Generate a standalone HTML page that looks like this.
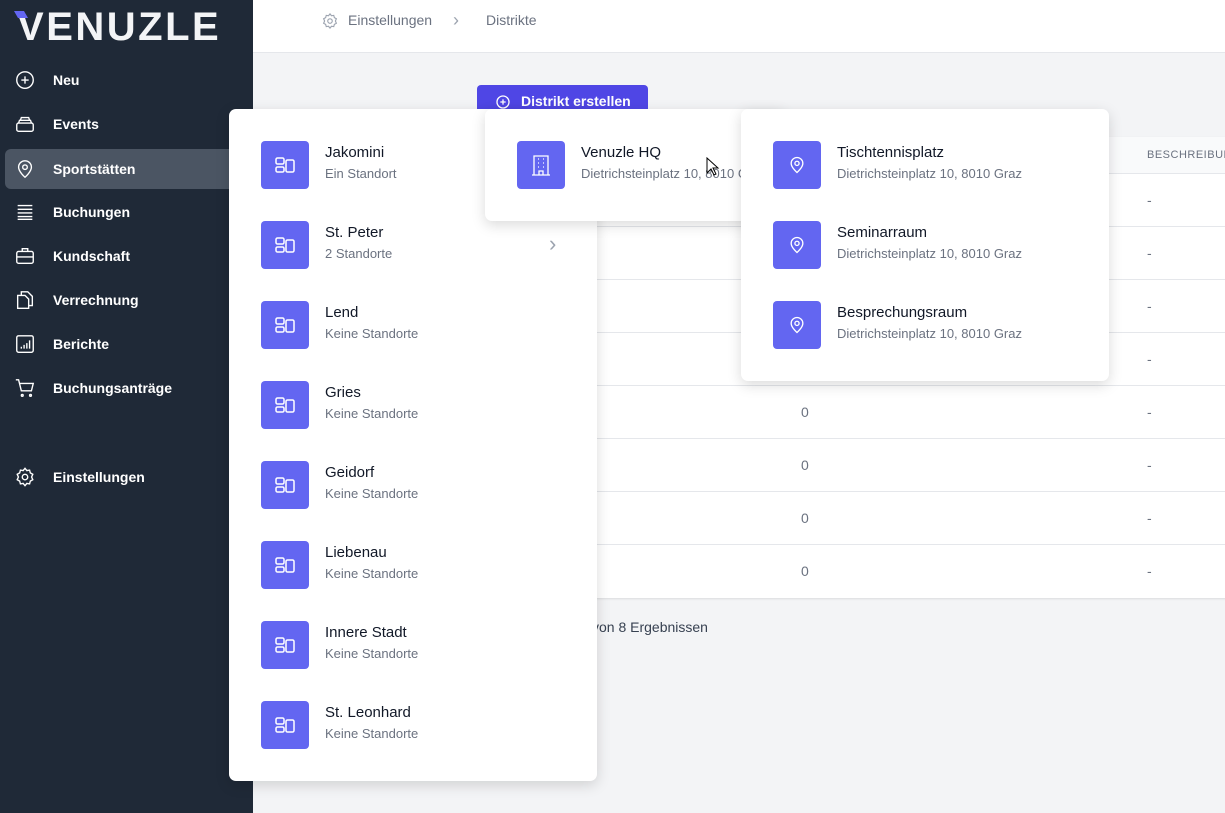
<!DOCTYPE html>
<html><head><meta charset="utf-8"><style>
*{box-sizing:border-box;margin:0;padding:0}
body{width:1225px;height:813px;overflow:hidden;background:#f3f4f6;font-family:"Liberation Sans",sans-serif;position:relative}
.side{position:absolute;left:0;top:0;width:253px;height:813px;background:#1f2937}
.logo{position:absolute;left:17px;top:5px;color:#f3f4f6;font-size:40px;font-weight:bold;letter-spacing:2.5px}
.nav{position:absolute;left:5px;width:240px;height:40px;color:#fff;font-size:14px;font-weight:bold;display:flex;align-items:center;border-radius:6px}
.nav svg{position:absolute;left:9px;width:22px;height:22px}
.nav span{position:absolute;left:48px}
.nav.act{background:#4b5563}
.top{position:absolute;left:253px;top:0;right:0;height:53px;background:#fff;border-bottom:1px solid #e5e7eb;font-size:14px;color:#6b7280}
.tbl{position:absolute;left:477px;top:137px;width:760px;height:461px;background:#fff;box-shadow:0 1px 2px rgba(0,0,0,.1)}
.tr{position:absolute;left:0;width:100%;border-top:1px solid #e5e7eb;height:53px;font-size:14px;color:#6b7280}
.btn{position:absolute;left:477px;top:85px;width:171px;height:30px;background:#4f46e5;border-radius:4px;color:#fff;font-size:14px;font-weight:bold}
.panel{position:absolute;background:#fff;border-radius:7px;box-shadow:0 4px 14px rgba(0,0,0,.15)}
.it{position:absolute;left:32px;height:48px;width:330px}
.ic{position:absolute;left:0;top:0;width:48px;height:48px;background:#6366f1;border-radius:4px;display:flex;align-items:center;justify-content:center}
.t1{position:absolute;left:64px;top:3px;font-size:15px;color:#111827;white-space:nowrap}
.t2{position:absolute;left:64px;top:25px;font-size:13px;color:#6b7280;white-space:nowrap}
</style></head><body>
<div class="side">
<div class="logo"><span style="position:relative">V<span style="position:absolute;left:-1px;top:6px;width:10px;height:7px;background:#6366f1;transform:skewX(30deg)"></span></span>ENUZLE</div>
<div class="nav" style="top:60px"><svg viewBox="0 0 24 24" fill="none" stroke="#fff" stroke-width="1.5"><circle cx="12" cy="12" r="9"/><path d="M12 8v8M8 12h8"/></svg><span>Neu</span></div>
<div class="nav" style="top:104px"><svg viewBox="0 0 24 24" fill="none" stroke="#fff" stroke-width="1.5"><rect x="3" y="11" width="18" height="9" rx="2"/><path d="M5 11l1-3h12l1 3M7 8l1-3h8l1 3"/></svg><span>Events</span></div>
<div class="nav act" style="top:149px"><svg viewBox="0 0 24 24" fill="none" stroke="#fff" stroke-width="1.5"><path d="M12 21s-7-6-7-11a7 7 0 0114 0c0 5-7 11-7 11z"/><circle cx="12" cy="10" r="2.5"/></svg><span>Sportstätten</span></div>
<div class="nav" style="top:192px"><svg viewBox="0 0 24 24" fill="none" stroke="#fff" stroke-width="1.5"><path d="M4 5h16M4 9h16M4 13h16M4 17h16M4 20h16"/></svg><span>Buchungen</span></div>
<div class="nav" style="top:236px"><svg viewBox="0 0 24 24" fill="none" stroke="#fff" stroke-width="1.5"><rect x="3" y="7" width="18" height="13" rx="2"/><path d="M9 7V4h6v3M3 13h18"/></svg><span>Kundschaft</span></div>
<div class="nav" style="top:280px"><svg viewBox="0 0 24 24" fill="none" stroke="#fff" stroke-width="1.5"><path d="M8 7V3h7l5 5v10h-4M4 7h8l4 4v10H4z"/></svg><span>Verrechnung</span></div>
<div class="nav" style="top:324px"><svg viewBox="0 0 24 24" fill="none" stroke="#fff" stroke-width="1.5"><rect x="3" y="3" width="18" height="18" rx="2"/><path d="M8 17v-2M11 17v-4M14 17v-6M17 17V8"/></svg><span>Berichte</span></div>
<div class="nav" style="top:368px"><svg viewBox="0 0 24 24" fill="none" stroke="#fff" stroke-width="1.5"><path d="M2 3h3l3 12h11l2-8H6"/><circle cx="9" cy="20" r="1"/><circle cx="18" cy="20" r="1"/></svg><span>Buchungsanträge</span></div>
<div class="nav" style="top:457px"><svg viewBox="0 0 24 24" fill="none" stroke="#fff" stroke-width="1.5"><circle cx="12" cy="12" r="3"/><path d="M12 2.5l2 2.5 3-.5.8 3 2.7 1.5-1.3 3 1.3 3-2.7 1.5-.8 3-3-.5-2 2.5-2-2.5-3 .5-.8-3L3.5 15l1.3-3-1.3-3 2.7-1.5.8-3 3 .5z"/></svg><span>Einstellungen</span></div>
</div>
<div class="top">
<svg style="position:absolute;left:68px;top:12px" width="18" height="18" viewBox="0 0 24 24" fill="none" stroke="#9ca3af" stroke-width="1.5"><circle cx="12" cy="12" r="3"/><path d="M12 2.5l2 2.5 3-.5.8 3 2.7 1.5-1.3 3 1.3 3-2.7 1.5-.8 3-3-.5-2 2.5-2-2.5-3 .5-.8-3L3.5 15l1.3-3-1.3-3 2.7-1.5.8-3 3 .5z"/></svg>
<span style="position:absolute;left:95px;top:12px">Einstellungen</span>
<span style="position:absolute;left:200px;top:10px;color:#9ca3af;font-size:18px">&#8250;</span>
<span style="position:absolute;left:233px;top:12px">Distrikte</span>
</div>
<div class="btn"><svg style="position:absolute;left:18px;top:9px" width="16" height="16" viewBox="0 0 24 24" fill="none" stroke="#fff" stroke-width="2"><circle cx="12" cy="12" r="9"/><path d="M12 8v8M8 12h8"/></svg><span style="position:absolute;left:44px;top:8px">Distrikt erstellen</span></div>
<div class="tbl">
<div style="position:absolute;left:0;top:0;width:100%;height:36px;background:#f9fafb"></div>
<span style="position:absolute;left:670px;top:12px;font-size:11px;color:#6b7280;letter-spacing:.5px">BESCHREIBUNG</span>
<div class="tr" style="top:36px"><span style="position:absolute;left:670px;top:18px">-</span></div>
<div class="tr" style="top:89px"><span style="position:absolute;left:670px;top:18px">-</span></div>
<div class="tr" style="top:142px"><span style="position:absolute;left:670px;top:18px">-</span></div>
<div class="tr" style="top:195px"><span style="position:absolute;left:670px;top:18px">-</span></div>
<div class="tr" style="top:248px"><span style="position:absolute;left:324px;top:18px">0</span><span style="position:absolute;left:670px;top:18px">-</span></div>
<div class="tr" style="top:301px"><span style="position:absolute;left:324px;top:18px">0</span><span style="position:absolute;left:670px;top:18px">-</span></div>
<div class="tr" style="top:354px"><span style="position:absolute;left:324px;top:18px">0</span><span style="position:absolute;left:670px;top:18px">-</span></div>
<div class="tr" style="top:407px"><span style="position:absolute;left:324px;top:18px">0</span><span style="position:absolute;left:670px;top:18px">-</span></div>
</div>
<span style="position:absolute;left:592px;top:619px;font-size:14px;color:#374151">von 8 Ergebnissen</span>

<div class="panel" style="left:229px;top:109px;width:368px;height:672px">
<div class="it" style="top:32px"><div class="ic"><svg width="22" height="18" viewBox="0 0 22 18" fill="none" stroke="#fff" stroke-width="1.5"><rect x="2" y="2" width="8" height="6" rx="1.5"/><rect x="2" y="11" width="8" height="5" rx="1.5"/><rect x="12" y="4" width="8" height="12" rx="1.5"/></svg></div><div class="t1">Jakomini</div><div class="t2">Ein Standort</div></div>
<div class="it" style="top:112px"><div class="ic"><svg width="22" height="18" viewBox="0 0 22 18" fill="none" stroke="#fff" stroke-width="1.5"><rect x="2" y="2" width="8" height="6" rx="1.5"/><rect x="2" y="11" width="8" height="5" rx="1.5"/><rect x="12" y="4" width="8" height="12" rx="1.5"/></svg></div><div class="t1">St. Peter</div><div class="t2">2 Standorte</div><span style="position:absolute;left:288px;top:10px;color:#9ca3af;font-size:22px">&#8250;</span></div>
<div class="it" style="top:192px"><div class="ic"><svg width="22" height="18" viewBox="0 0 22 18" fill="none" stroke="#fff" stroke-width="1.5"><rect x="2" y="2" width="8" height="6" rx="1.5"/><rect x="2" y="11" width="8" height="5" rx="1.5"/><rect x="12" y="4" width="8" height="12" rx="1.5"/></svg></div><div class="t1">Lend</div><div class="t2">Keine Standorte</div></div>
<div class="it" style="top:272px"><div class="ic"><svg width="22" height="18" viewBox="0 0 22 18" fill="none" stroke="#fff" stroke-width="1.5"><rect x="2" y="2" width="8" height="6" rx="1.5"/><rect x="2" y="11" width="8" height="5" rx="1.5"/><rect x="12" y="4" width="8" height="12" rx="1.5"/></svg></div><div class="t1">Gries</div><div class="t2">Keine Standorte</div></div>
<div class="it" style="top:352px"><div class="ic"><svg width="22" height="18" viewBox="0 0 22 18" fill="none" stroke="#fff" stroke-width="1.5"><rect x="2" y="2" width="8" height="6" rx="1.5"/><rect x="2" y="11" width="8" height="5" rx="1.5"/><rect x="12" y="4" width="8" height="12" rx="1.5"/></svg></div><div class="t1">Geidorf</div><div class="t2">Keine Standorte</div></div>
<div class="it" style="top:432px"><div class="ic"><svg width="22" height="18" viewBox="0 0 22 18" fill="none" stroke="#fff" stroke-width="1.5"><rect x="2" y="2" width="8" height="6" rx="1.5"/><rect x="2" y="11" width="8" height="5" rx="1.5"/><rect x="12" y="4" width="8" height="12" rx="1.5"/></svg></div><div class="t1">Liebenau</div><div class="t2">Keine Standorte</div></div>
<div class="it" style="top:512px"><div class="ic"><svg width="22" height="18" viewBox="0 0 22 18" fill="none" stroke="#fff" stroke-width="1.5"><rect x="2" y="2" width="8" height="6" rx="1.5"/><rect x="2" y="11" width="8" height="5" rx="1.5"/><rect x="12" y="4" width="8" height="12" rx="1.5"/></svg></div><div class="t1">Innere Stadt</div><div class="t2">Keine Standorte</div></div>
<div class="it" style="top:592px"><div class="ic"><svg width="22" height="18" viewBox="0 0 22 18" fill="none" stroke="#fff" stroke-width="1.5"><rect x="2" y="2" width="8" height="6" rx="1.5"/><rect x="2" y="11" width="8" height="5" rx="1.5"/><rect x="12" y="4" width="8" height="12" rx="1.5"/></svg></div><div class="t1">St. Leonhard</div><div class="t2">Keine Standorte</div></div>
</div>

<div class="panel" style="left:485px;top:109px;width:300px;height:112px">
<div class="it" style="top:32px"><div class="ic"><svg width="20" height="22" viewBox="0 0 20 22" fill="none" stroke="#fff" stroke-width="1.3"><path d="M3 21V2h14v19M1 21h18M8 21v-4h4v4M7 5h1M12 5h1M7 9h1M12 9h1M7 13h1M12 13h1"/></svg></div><div class="t1">Venuzle HQ</div><div class="t2">Dietrichsteinplatz 10, 8010 Graz</div></div>
<svg style="position:absolute;left:221px;top:48px" width="14" height="20" viewBox="0 0 14 20"><path d="M1 1v15l4-4 3 6 2-1-3-6h5z" fill="#fff" stroke="#000"/></svg>
</div>

<div class="panel" style="left:741px;top:109px;width:368px;height:272px">
<div class="it" style="top:32px"><div class="ic"><svg width="20" height="22" viewBox="0 0 24 24" fill="none" stroke="#fff" stroke-width="1.6"><path d="M12 21s-7-6-7-11a7 7 0 0114 0c0 5-7 11-7 11z"/><circle cx="12" cy="10" r="2.5"/></svg></div><div class="t1">Tischtennisplatz</div><div class="t2">Dietrichsteinplatz 10, 8010 Graz</div></div>
<div class="it" style="top:112px"><div class="ic"><svg width="20" height="22" viewBox="0 0 24 24" fill="none" stroke="#fff" stroke-width="1.6"><path d="M12 21s-7-6-7-11a7 7 0 0114 0c0 5-7 11-7 11z"/><circle cx="12" cy="10" r="2.5"/></svg></div><div class="t1">Seminarraum</div><div class="t2">Dietrichsteinplatz 10, 8010 Graz</div></div>
<div class="it" style="top:192px"><div class="ic"><svg width="20" height="22" viewBox="0 0 24 24" fill="none" stroke="#fff" stroke-width="1.6"><path d="M12 21s-7-6-7-11a7 7 0 0114 0c0 5-7 11-7 11z"/><circle cx="12" cy="10" r="2.5"/></svg></div><div class="t1">Besprechungsraum</div><div class="t2">Dietrichsteinplatz 10, 8010 Graz</div></div>
</div>
</body></html>
